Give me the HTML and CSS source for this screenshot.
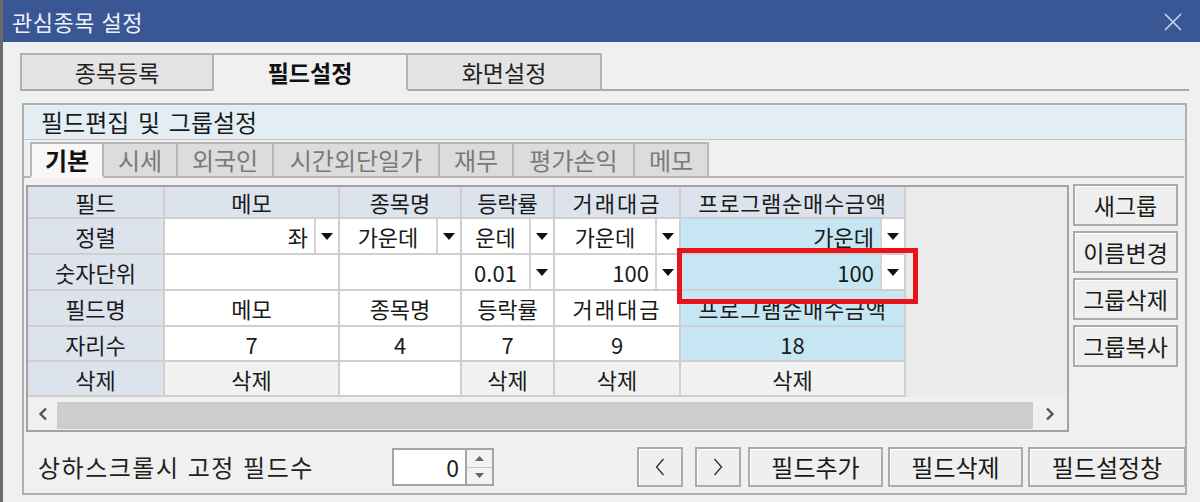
FILE: index.html
```html
<!DOCTYPE html>
<html lang="ko">
<head>
<meta charset="utf-8">
<title>관심종목 설정</title>
<link rel="stylesheet" href="styles.css">
</head>
<body>
<div class="titlebar">
  <span class="title">관심종목 설정</span>
  <svg class="close" width="18" height="18" viewBox="0 0 18 18"><path d="M1 1L17 17M17 1L1 17" stroke="#cfd8ea" stroke-width="1.6" fill="none"/></svg>
</div>

<div class="toptabs">
  <div class="ttab">종목등록</div>
  <div class="ttab active">필드설정</div>
  <div class="ttab">화면설정</div>
</div>

<div class="group">
  <div class="ghead">필드편집 및 그룹설정</div>
  <div class="subtabs">
    <div class="stab active w74">기본</div>
    <div class="stab w74">시세</div>
    <div class="stab w96">외국인</div>
    <div class="stab w166">시간외단일가</div>
    <div class="stab w74">재무</div>
    <div class="stab w121">평가손익</div>
    <div class="stab w74">메모</div>
  </div>

  <div class="main">
    <div class="gridbox">
      <div class="table">
        <div class="c hd">필드</div>
        <div class="c hd">메모</div>
        <div class="c hd">종목명</div>
        <div class="c hd">등락률</div>
        <div class="c hd sp">거래대금</div>
        <div class="c hd sp2">프로그램순매수금액</div>

        <div class="c hd">정렬</div>
        <div class="c dd"><span class="v right">좌</span><span class="arr"><svg width="12" height="7" viewBox="0 0 12 7"><path d="M0 0H12L6 7Z" fill="#111"/></svg></span></div>
        <div class="c dd"><span class="v">가운데</span><span class="arr"><svg width="12" height="7" viewBox="0 0 12 7"><path d="M0 0H12L6 7Z" fill="#111"/></svg></span></div>
        <div class="c dd"><span class="v">운데</span><span class="arr"><svg width="12" height="7" viewBox="0 0 12 7"><path d="M0 0H12L6 7Z" fill="#111"/></svg></span></div>
        <div class="c dd"><span class="v">가운데</span><span class="arr"><svg width="12" height="7" viewBox="0 0 12 7"><path d="M0 0H12L6 7Z" fill="#111"/></svg></span></div>
        <div class="c dd blue"><span class="v right">가운데</span><span class="arr"><svg width="12" height="7" viewBox="0 0 12 7"><path d="M0 0H12L6 7Z" fill="#111"/></svg></span></div>

        <div class="c hd">숫자단위</div>
        <div class="c wh"></div>
        <div class="c wh"></div>
        <div class="c dd"><span class="v">0.01</span><span class="arr"><svg width="12" height="7" viewBox="0 0 12 7"><path d="M0 0H12L6 7Z" fill="#111"/></svg></span></div>
        <div class="c dd"><span class="v right">100</span><span class="arr"><svg width="12" height="7" viewBox="0 0 12 7"><path d="M0 0H12L6 7Z" fill="#111"/></svg></span></div>
        <div class="c dd blue"><span class="v right">100</span><span class="arr"><svg width="12" height="7" viewBox="0 0 12 7"><path d="M0 0H12L6 7Z" fill="#111"/></svg></span></div>

        <div class="c hd">필드명</div>
        <div class="c wh">메모</div>
        <div class="c wh">종목명</div>
        <div class="c wh">등락률</div>
        <div class="c wh sp">거래대금</div>
        <div class="c blue sp2">프로그램순매수금액</div>

        <div class="c hd">자리수</div>
        <div class="c wh">7</div>
        <div class="c wh">4</div>
        <div class="c wh">7</div>
        <div class="c wh">9</div>
        <div class="c blue">18</div>

        <div class="c hd">삭제</div>
        <div class="c gr">삭제</div>
        <div class="c wh"></div>
        <div class="c gr">삭제</div>
        <div class="c gr">삭제</div>
        <div class="c gr">삭제</div>
      </div>
      <div class="hscroll">
        <span class="sarr left"><svg width="10" height="14" viewBox="0 0 10 14"><path d="M8 1.5L2.5 7L8 12.5" stroke="#555" stroke-width="2.4" fill="none"/></svg></span>
        <div class="thumb"></div>
        <span class="sarr right"><svg width="10" height="14" viewBox="0 0 10 14"><path d="M2 1.5L7.5 7L2 12.5" stroke="#555" stroke-width="2.4" fill="none"/></svg></span>
      </div>
    </div>
    <div class="side">
      <button class="btn sbtn">새그룹</button>
      <button class="btn sbtn">이름변경</button>
      <button class="btn sbtn">그룹삭제</button>
      <button class="btn sbtn">그룹복사</button>
    </div>
  </div>

  <div class="bottom">
    <span class="label">상하스크롤시 고정 필드수</span>
    <div class="spin">
      <span class="spinval">0</span>
      <span class="spinbtns">
        <span class="sb"><svg width="9" height="5" viewBox="0 0 9 5"><path d="M0 5H9L4.5 0Z" fill="#666"/></svg></span>
        <span class="sb"><svg width="9" height="5" viewBox="0 0 9 5"><path d="M0 0H9L4.5 5Z" fill="#666"/></svg></span>
      </span>
    </div>
    <div class="navs">
      <button class="btn nav"><svg width="10" height="18" viewBox="0 0 10 18"><path d="M8.5 1L1.5 9L8.5 17" stroke="#333" stroke-width="1.4" fill="none"/></svg></button>
      <button class="btn nav gap12"><svg width="10" height="18" viewBox="0 0 10 18"><path d="M1.5 1L8.5 9L1.5 17" stroke="#333" stroke-width="1.4" fill="none"/></svg></button>
      <button class="btn bb w135 gap7">필드추가</button>
      <button class="btn bb w135">필드삭제</button>
      <button class="btn bb w158">필드설정창</button>
    </div>
  </div>
</div>

<div class="redbox"></div>
</body>
</html>
```

FILE: styles.css
```css
* { box-sizing: border-box; }

html, body { margin: 0; padding: 0; }

body {
  width: 1200px;
  height: 502px;
  overflow: hidden;
  background: #f0f0f0;
  border-left: 3px solid #6b6b6b;
  font-family: "Noto Sans CJK KR", "Noto Sans", sans-serif;
  font-size: 22px;
  color: #1e1e1e;
  line-height: 1;
}

.titlebar {
  height: 42px;
  background: #3a5795;
  display: flex;
  align-items: center;
  justify-content: space-between;
  padding: 0 18px 0 9px;
}
.title {
  color: #eef1f8;
  font-size: 22px;
  letter-spacing: 0.5px;
}
.close { display: block; margin-top: 2px; }

/* top tabs */
.toptabs {
  margin: 11px 0 0 17px;
  width: 1169px;
  display: flex;
  border-bottom: 2px solid #a9a9a9;
}
.ttab {
  width: 194px;
  height: 38px;
  margin-bottom: -2px;
  border: 2px solid #b3b3b3;
  border-bottom-color: #a9a9a9;
  background: #e3e3e3;
  display: flex;
  align-items: center;
  justify-content: center;
  color: #222;
  font-size: 23px;
}
.ttab + .ttab { border-left: none; }
.ttab.active {
  background: #f0f0f0;
  border-bottom-color: #f0f0f0;
  font-weight: 700;
  color: #111;
}

/* group box */
.group {
  margin: 12px 0 0 19px;
  width: 1165px;
  height: 392px;
  border: 2px solid #b0b0b0;
  display: flex;
  flex-direction: column;
}
.ghead {
  height: 35px;
  background: #e2eef3;
  border-bottom: 1px solid #c6c6c6;
  padding-left: 17px;
  display: flex;
  align-items: center;
  color: #1a1a1a;
  font-size: 24px;
  word-spacing: 2px;
}

.subtabs {
  margin: 2px 1px 0 0;
  padding-left: 6px;
  display: flex;
  border-bottom: 2px solid #b5b5b5;
}
.stab {
  height: 36px;
  margin-bottom: -2px;
  border: 2px solid #b8b8b8;
  border-bottom-color: #b5b5b5;
  background: #dcdcdc;
  color: #7a7a7a;
  display: flex;
  align-items: center;
  justify-content: center;
  font-size: 24px;
}
.stab + .stab { border-left: none; }
.stab.active {
  background: #f7f7f7;
  border-bottom-color: #f7f7f7;
  color: #111;
  font-weight: 700;
}
.w74 { width: 74px; }
.w96 { width: 96px; }
.w121 { width: 121px; }
.w166 { width: 166px; }

/* main row */
.main {
  margin-top: 7px;
  padding-left: 2px;
  display: flex;
  gap: 4px;
}
.gridbox {
  width: 1043px;
  height: 247px;
  border: 2px solid #a3a3a3;
  background: #ebebeb;
  display: flex;
  flex-direction: column;
}
.table {
  display: grid;
  grid-template-columns: 137px 175px 122px 93px 126px 225px;
  grid-template-rows: 32px 36px 36px 36px 35px 35px;
}
.c {
  border-right: 2px solid #cfcfcf;
  border-bottom: 2px solid #cfcfcf;
  display: flex;
  align-items: center;
  justify-content: center;
  white-space: nowrap;
  overflow: hidden;
  color: #1a1a1a;
}
.hd { background: #dce3ec; }
.wh { background: #ffffff; }
.gr { background: #f1f1f1; }
.blue { background: #c7e6f3; }
.sp { letter-spacing: 2px; }
.sp2 { letter-spacing: 0.7px; }

.dd {
  background: #ffffff;
  justify-content: stretch;
  align-items: stretch;
}
.dd.blue { background: #c7e6f3; }
.v {
  flex: 1;
  display: flex;
  align-items: center;
  justify-content: center;
  padding: 0 4px;
}
.v.right { justify-content: flex-end; padding-right: 6px; }
.arr {
  width: 24px;
  flex: none;
  background: #ffffff;
  border-left: 2px solid #d4d4d4;
  display: flex;
  align-items: center;
  justify-content: center;
}

.hscroll {
  flex: 1;
  background: #f0f0f0;
  display: flex;
  align-items: center;
}
.sarr {
  display: flex;
  align-items: center;
  justify-content: center;
  height: 100%;
}
.sarr.left { width: 29px; }
.sarr.right { width: 34px; }
.thumb {
  flex: 1;
  height: 27px;
  margin-top: 3px;
  background: #cdcdcd;
}

/* buttons */
.btn {
  font-family: inherit;
  font-size: 23px;
  color: #1a1a1a;
  background: #efefef;
  border: 2px solid #ababab;
  box-shadow: inset 1px 1px 0 #ffffff;
  padding: 0;
  margin: 0;
  display: flex;
  align-items: center;
  justify-content: center;
  line-height: 1;
}
.side {
  display: flex;
  flex-direction: column;
  gap: 5px;
  margin-top: -1px;
}
.sbtn { width: 105px; height: 42px; }
.bb { font-size: 24px; }

/* bottom row */
.bottom {
  margin-top: 15px;
  padding-left: 14px;
  height: 40px;
  display: flex;
  align-items: center;
}
.label {
  width: 354px;
  flex: none;
  color: #222;
  font-size: 24px;
  letter-spacing: 1.5px;
}
.spin {
  width: 102px;
  height: 38px;
  border: 2px solid #a5a5a5;
  background: #ffffff;
  display: flex;
}
.spinval {
  flex: 1;
  display: flex;
  align-items: center;
  justify-content: flex-end;
  padding-right: 6px;
  font-size: 23px;
}
.spinbtns {
  width: 27px;
  border-left: 2px solid #a5a5a5;
  background: #f3f3f3;
  display: flex;
  flex-direction: column;
}
.sb {
  flex: 1;
  display: flex;
  align-items: center;
  justify-content: center;
}
.sb + .sb { border-top: 1px solid #c8c8c8; }

.navs {
  margin-left: auto;
  margin-right: -1px;
  display: flex;
  gap: 5px;
}
.nav { width: 46px; height: 40px; }
.gap12 { margin-left: 7px; }
.gap7 { margin-left: 2px; }
.w135 { width: 135px; height: 40px; }
.w158 { width: 158px; height: 40px; }

/* highlight overlay */
.redbox {
  position: absolute;
  left: 677px;
  top: 248px;
  width: 241px;
  height: 56px;
  border: 5px solid #e8131b;
}
```
